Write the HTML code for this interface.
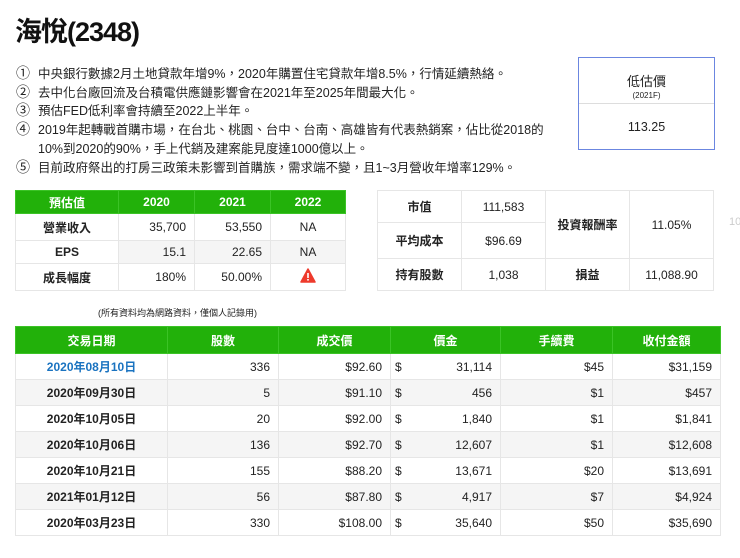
<!DOCTYPE html>
<html><head><meta charset="utf-8"><style>
*{margin:0;padding:0;box-sizing:border-box}
body{width:740px;height:558px;background:#fff;font-family:"Liberation Sans","Noto Sans CJK TC",sans-serif;color:#222;position:relative;overflow:hidden}
.a{position:absolute}
h1{position:absolute;left:15px;top:10px;font-size:27px;font-weight:bold;letter-spacing:-1px;color:#111}
.li{position:absolute;left:16px;font-size:12.5px;white-space:nowrap}
.li span{display:inline-block;width:22px;font-size:14px}
table{border-collapse:collapse;position:absolute;font-size:12px}
td,th{border:1px solid #e6e6e6}
th{background:#22b10a;color:#fff;font-weight:bold;text-align:center;border-color:#3bc326}
.r{text-align:right;padding-right:8px}
.c{text-align:center}
.b{font-weight:bold}
.g td{background:#f5f5f5}
</style></head><body>
<h1>海悅(2348)</h1>
<div class="li" style="top:63px"><span>①</span>中央銀行數據2月土地貸款年增9%，2020年購置住宅貸款年增8.5%，行情延續熱絡。</div>
<div class="li" style="top:82px"><span>②</span>去中化台廠回流及台積電供應鏈影響會在2021年至2025年間最大化。</div>
<div class="li" style="top:100px"><span>③</span>預估FED低利率會持續至2022上半年。</div>
<div class="li" style="top:119px"><span>④</span>2019年起轉戰首購市場，在台北、桃園、台中、台南、高雄皆有代表熱銷案，佔比從2018的</div>
<div class="li" style="top:138px"><span></span>10%到2020的90%，手上代銷及建案能見度達1000億以上。</div>
<div class="li" style="top:157px"><span>⑤</span>目前政府祭出的打房三政策未影響到首購族，需求端不變，且1~3月營收年增率129%。</div>

<div class="a" style="left:578px;top:57px;width:137px;height:93px;border:1.5px solid #6b86e0">
 <div style="height:46px;border-bottom:1px solid #ddd;text-align:center;padding-top:13px;font-size:13px">低估價<div style="font-size:8px;margin-top:1px">(2021F)</div></div>
 <div style="text-align:center;font-size:12.5px;padding-top:16px">113.25</div>
</div>

<table style="left:15px;top:190px;width:331px">
<tr style="height:23px"><th style="width:103px">預估值</th><th style="width:76px">2020</th><th style="width:76px">2021</th><th>2022</th></tr>
<tr style="height:27px"><td class="c b">營業收入</td><td class="r">35,700</td><td class="r">53,550</td><td class="c">NA</td></tr>
<tr style="height:23px" class="g"><td class="c b" style="background:#fff">EPS</td><td class="r">15.1</td><td class="r">22.65</td><td class="c">NA</td></tr>
<tr style="height:27px"><td class="c b">成長幅度</td><td class="r">180%</td><td class="r">50.00%</td><td class="c"><svg width="16" height="15" viewBox="0 0 16 15"><path d="M8 1 L15 14 L1 14 Z" fill="#ee3a2c" stroke="#ee3a2c" stroke-linejoin="round" stroke-width="1.5"/><rect x="7.2" y="5" width="1.6" height="5" fill="#fff"/><rect x="7.2" y="11" width="1.6" height="1.6" fill="#fff"/></svg></td></tr>
</table>

<table style="left:377px;top:190px;width:337px">
<tr style="height:32px"><td class="c b" style="width:84px">市值</td><td class="c" style="width:84px">111,583</td><td class="c b" rowspan="2" style="width:84px">投資報酬率</td><td class="c" rowspan="2">11.05%</td></tr>
<tr style="height:36px"><td class="c b">平均成本</td><td class="c">$96.69</td></tr>
<tr style="height:32px"><td class="c b">持有股數</td><td class="c">1,038</td><td class="c b">損益</td><td class="c">11,088.90</td></tr>
</table>
<div class="a" style="left:729px;top:216px;font-size:11px;color:#ccc">10</div>

<div class="a" style="left:98px;top:306px;font-size:9px">(所有資料均為網路資料，僅個人記錄用)</div>

<table style="left:15px;top:326px;width:706px">
<tr style="height:27px"><th style="width:152px">交易日期</th><th style="width:111px">股數</th><th style="width:112px">成交價</th><th style="width:110px">價金</th><th style="width:112px">手續費</th><th>收付金額</th></tr>
<tr style="height:26px"><td class="c b" style="color:#1a73c0">2020年08月10日</td><td class="r">336</td><td class="r">$92.60</td><td class="r"><span style="float:left;padding-left:4px">$</span>31,114</td><td class="r">$45</td><td class="r">$31,159</td></tr>
<tr style="height:26px" class="g"><td class="c b">2020年09月30日</td><td class="r">5</td><td class="r">$91.10</td><td class="r"><span style="float:left;padding-left:4px">$</span>456</td><td class="r">$1</td><td class="r">$457</td></tr>
<tr style="height:26px"><td class="c b">2020年10月05日</td><td class="r">20</td><td class="r">$92.00</td><td class="r"><span style="float:left;padding-left:4px">$</span>1,840</td><td class="r">$1</td><td class="r">$1,841</td></tr>
<tr style="height:26px" class="g"><td class="c b">2020年10月06日</td><td class="r">136</td><td class="r">$92.70</td><td class="r"><span style="float:left;padding-left:4px">$</span>12,607</td><td class="r">$1</td><td class="r">$12,608</td></tr>
<tr style="height:26px"><td class="c b">2020年10月21日</td><td class="r">155</td><td class="r">$88.20</td><td class="r"><span style="float:left;padding-left:4px">$</span>13,671</td><td class="r">$20</td><td class="r">$13,691</td></tr>
<tr style="height:26px" class="g"><td class="c b">2021年01月12日</td><td class="r">56</td><td class="r">$87.80</td><td class="r"><span style="float:left;padding-left:4px">$</span>4,917</td><td class="r">$7</td><td class="r">$4,924</td></tr>
<tr style="height:26px"><td class="c b">2020年03月23日</td><td class="r">330</td><td class="r">$108.00</td><td class="r"><span style="float:left;padding-left:4px">$</span>35,640</td><td class="r">$50</td><td class="r">$35,690</td></tr>
</table>
</body></html>
